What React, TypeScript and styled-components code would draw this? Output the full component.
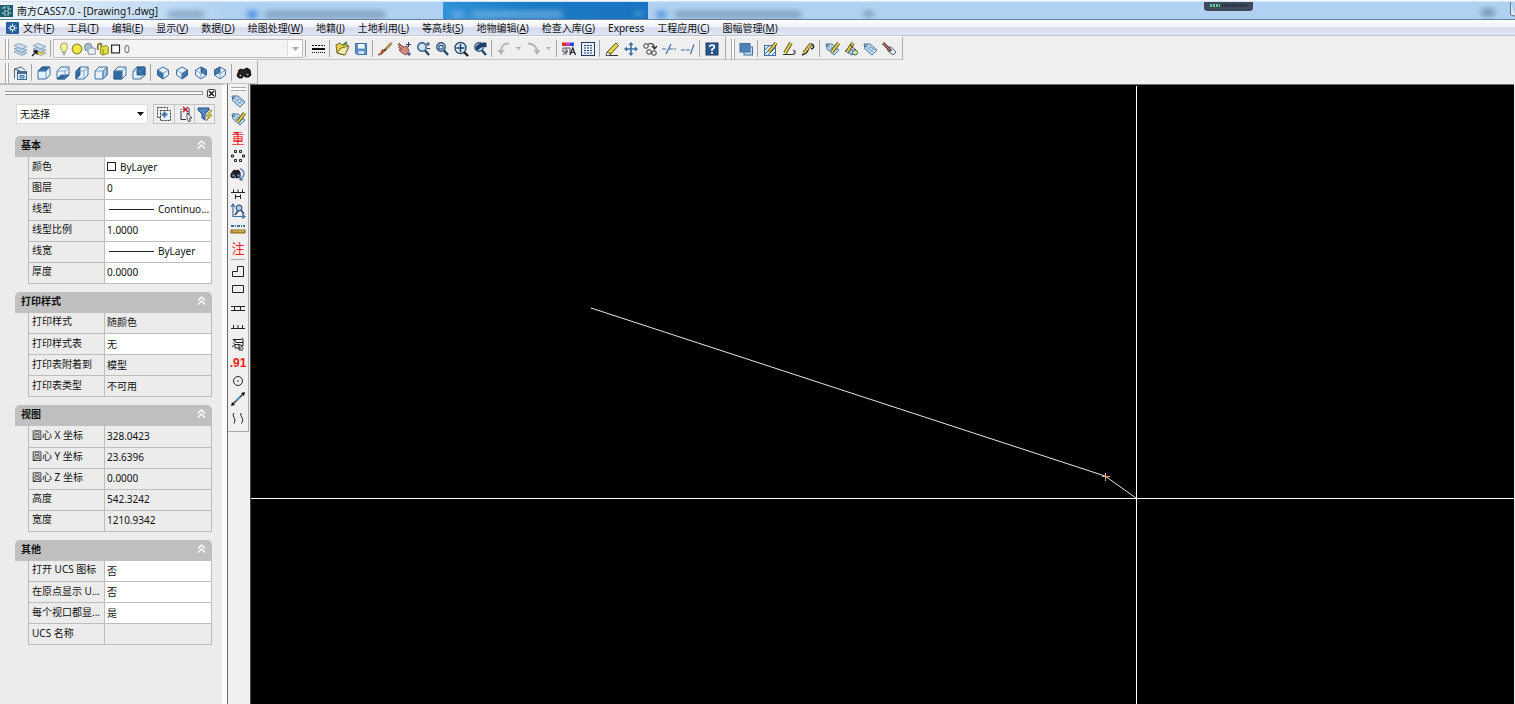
import React from "react";
import styled, { createGlobalStyle } from "styled-components";

const GlobalStyle = createGlobalStyle`
  *, *::before, *::after { box-sizing: border-box; }
  body {
    margin: 0;
    background: #ececec;
    color: #111;
    font: 10px/14px "Noto Sans", "Noto Sans CJK SC", sans-serif;
  }
  button, input, select { font: inherit; color: inherit; margin: 0; padding: 0; }
  svg { display: block; }
`;

const NAVY = "#1d3c6a";
const BLUE = "#3a70a6";
const SKY = "#a8c8e8";
const PALE = "#e4eff9";
const GOLD = "#e6d340";
const WOOD = "#8a6a1c";

/* ---------- layout ---------- */

const Window = styled.div`
  display: flex;
  flex-direction: column;
  min-height: 100vh;
`;

const TitleBar = styled.header`
  position: relative;
  display: flex;
  align-items: center;
  gap: 4px;
  height: 21px;
  overflow: hidden;
  background: linear-gradient(#f4f8fc 0 1px, #b0d1f1 2px 19px, #66809c 19px 20px, #fff 20px);
`;

const Glass = styled.svg`
  position: absolute;
  inset: 2px 0 2px 0;
  width: 100%;
  height: 17px;
`;

const Title = styled.h1`
  position: relative;
  margin: 0;
  padding-top: 1px;
  font-size: 10px;
  line-height: 16px;
  font-weight: 400;
`;

const TitleIcon = styled.span`
  position: relative;
`;

const MenuBar = styled.nav`
  display: flex;
  align-items: center;
  gap: 4px;
  height: 15px;
  padding-left: 6px;
  background: linear-gradient(#fcfdff, #eef1fa 40%, #d5dcef 50%, #e1e6f4);
  border-bottom: 1px solid #c3c6d0;
`;

const MenuList = styled.div`
  display: flex;
  gap: 13px;
`;

const MenuButton = styled.button`
  border: 0;
  background: none;
  line-height: 14px;
  white-space: nowrap;
`;

const ToolRow = styled.div`
  display: flex;
  height: 24px;
  background: #efefef;
`;

const ToolBar = styled.div`
  display: flex;
  align-items: center;
  padding: 1px 4px 0 5px;
  border-right: 1px solid #adadad;
  border-bottom: 1px solid #c4c4c4;
  border-top: 1px solid #fafafa;
`;

const Grip = styled.span<{ $across?: boolean }>`
  display: block;
  flex: none;
  width: ${(p) => (p.$across ? "15px" : "4px")};
  height: ${(p) => (p.$across ? "4px" : "20px")};
  margin: ${(p) => (p.$across ? "0 0 1px 3px" : "0 1px 0 0")};
  border: solid #a8a8a8;
  border-width: ${(p) => (p.$across ? "1px 0" : "0 1px")};
  background: #fdfdfd;
`;

const IconButton = styled.button`
  flex: none;
  display: flex;
  align-items: center;
  justify-content: center;
  width: 19px;
  height: 20px;
  border: 0;
  background: none;
`;

const DropArrow = styled.button`
  display: flex;
  align-items: center;
  justify-content: center;
  width: 11px;
  height: 20px;
  border: 0;
  background: none;
`;

const Divider = styled.span`
  flex: none;
  width: 1px;
  height: 17px;
  margin: 0 2px;
  background: #a6a6a6;
`;

const LayerBox = styled.div`
  display: flex;
  align-items: center;
  width: 250px;
  height: 19px;
  padding-left: 3px;
  background: #f4f4f4;
  border: 1px solid #bcbcbc;
`;

const LayerIcon = styled.span`
  width: 13px;
  height: 14px;
`;

const LayerSelect = styled.select`
  appearance: none;
  flex: 1;
  height: 17px;
  padding-left: 2px;
  border: 0;
  background: none;
  color: #666;
`;

const ArrowBox = styled.span`
  display: flex;
  align-items: center;
  justify-content: center;
  width: 15px;
  height: 15px;
  border-left: 1px solid #dcdcdc;
  background: #fafafa;
  pointer-events: none;
`;

const Body = styled.div`
  display: flex;
  flex: 1;
`;

const Panel = styled.aside`
  flex: none;
  width: 227px;
  padding: 3px 6px 20px 5px;
  background: #ececec;
  border-top: 1px solid #b9b9b9;
  border-right: 5px solid #fbfbfb;
`;

const PanelTop = styled.div`
  display: flex;
  align-items: center;
  gap: 4px;
  height: 10px;
`;

const PanelGrip = styled.span`
  flex: 1;
  height: 4px;
  border: solid #979797;
  border-width: 1px 1px 1px 0;
  background: #fafafa;
`;

const CloseButton = styled.button`
  width: 9px;
  height: 9px;
  border: 1px solid #444;
  border-radius: 2px;
  background: #f8f8f8;
`;

const Picker = styled.div`
  display: flex;
  align-items: center;
  gap: 5px;
  margin: 6px 0 12px 11px;
`;

const SelectWrap = styled.div`
  flex: none;
  display: flex;
  align-items: center;
  width: 132px;
  height: 20px;
  padding-right: 3px;
  background: #fff;
  border: 1px solid #dadada;
`;

const Select = styled.select`
  appearance: none;
  flex: 1;
  height: 18px;
  padding-left: 3px;
  border: 0;
  background: none;
`;

const PickButtons = styled.div`
  display: flex;
  border: 1px solid #c4c4c4;
`;

const PickButton = styled.button`
  display: flex;
  align-items: center;
  justify-content: center;
  width: 20px;
  height: 18px;
  border: 0;
  background: #efefef;
  & + & { border-left: 1px solid #c4c4c4; }
`;

const Group = styled.section`
  width: 197px;
  margin: 0 0 8px 10px;
`;

const GroupHead = styled.div`
  display: flex;
  align-items: center;
  justify-content: space-between;
  height: 21px;
  padding: 0 6px 3px;
  border-radius: 5px 5px 0 0;
  background: #c0c0c0;
`;

const GroupTitle = styled.h2`
  margin: 0;
  font-size: 10px;
  line-height: 14px;
  font-weight: 700;
`;

const Fold = styled.button`
  display: flex;
  align-items: center;
  height: 16px;
  border: 0;
  background: none;
`;

const Table = styled.table`
  width: 184px;
  margin-left: 13px;
  border-collapse: collapse;
  table-layout: fixed;
`;

const Name = styled.th`
  width: 76px;
  height: 21px;
  padding: 0 1px 3px 3px;
  border: 1px solid #bdbdbd;
  border-top: 0;
  font-weight: 400;
  text-align: left;
  white-space: nowrap;
  overflow: hidden;
  line-height: 14px;
`;

const Value = styled.td<{ $white?: boolean }>`
  height: 21px;
  padding: 0 0 1px 2px;
  border: 1px solid #bdbdbd;
  border-top: 0;
  background: ${(p) => (p.$white ? "#fff" : "transparent")};
  white-space: nowrap;
  line-height: 14px;
`;

const ValueInput = styled.input`
  display: block;
  width: 100%;
  height: 16px;
  border: 0;
  background: none;
  outline: 0;
`;

const Sample = styled.span`
  display: flex;
  align-items: center;
  gap: 4px;
`;

const Swatch = styled.span`
  width: 9px;
  height: 9px;
  border: 1px solid #222;
  background: #fff;
`;

const Stroke = styled.span`
  width: 45px;
  height: 1px;
  margin-left: 2px;
  background: #222;
`;

const Dock = styled.div`
  flex: none;
  width: 24px;
  background: #f0f0f0;
  border-left: 1px solid #6b6b6b;
  border-right: 1px solid #4a4a4a;
`;

const Strip = styled.div`
  width: 21px;
  height: 348px;
  padding-top: 3px;
  border-right: 1px solid #a9a9a9;
  border-bottom: 1px solid #a9a9a9;
`;

const StripGroup = styled.div`
  display: grid;
  grid-auto-rows: 1fr;
  height: 165px;
`;

const StripButton = styled.button`
  display: flex;
  align-items: center;
  justify-content: center;
  width: 20px;
  min-height: 0;
  border: 0;
  background: none;
`;

const StripRule = styled.span`
  display: block;
  height: 1px;
  margin: 2px 3px;
  background: #a9a9a9;
`;

const RedGlyph = styled.span<{ $small?: boolean }>`
  color: #ee1c1c;
  font-family: ${(p) => (p.$small ? '"Liberation Sans Narrow", "Liberation Sans"' : '"Noto Sans CJK SC"')}, sans-serif;
  font-size: ${(p) => (p.$small ? "12px" : "13px")};
  font-weight: ${(p) => (p.$small ? 700 : 400)};
  line-height: 16px;
`;

const Canvas = styled.main`
  flex: 1;
  display: flex;
  min-width: 0;
  margin-right: 1px;
  background: #000;
  border-top: 1px solid #6e6e6e;
`;

const Drawing = styled.svg`
  width: 100%;
  height: auto;
  flex: 1;
`;

/* ---------- icons ---------- */

const Svg = ({ children, size = 16 }: { children: React.ReactNode; size?: number }) => (
  <svg width={size} height={size} viewBox="0 0 16 16" fill="none" stroke={NAVY} strokeWidth="1" aria-hidden="true">
    {children}
  </svg>
);

const Pencil = ({ d = "M14 2 L6 12" }: { d?: string }) => (
  <>
    <path d={d} stroke="#4d4420" strokeWidth="3.6" />
    <path d={d} stroke={GOLD} strokeWidth="2" />
  </>
);

const sheets = (c: string) => (
  <>
    <path d="M2 11 L7 9 L15 12 L10 14.5Z" fill={c} stroke="#7c98b4" strokeWidth=".7" />
    <path d="M2 8 L7 6 L15 9 L10 11.5Z" fill="#b9d0e6" stroke="#6c8cae" strokeWidth=".7" />
    <path d="M2 4.5 L7 2.5 L15 5.5 L10 8Z" fill="#cfdfee" stroke="#6c8cae" strokeWidth=".7" />
  </>
);

const lens = (
  <>
    <circle cx="7" cy="6" r="4.2" fill="#cfe2f4" stroke="#33597f" strokeWidth="1.4" />
    <path d="M10 9.5 L14 14" stroke="#27456b" strokeWidth="2.4" />
  </>
);

const tag = (
  <>
    <path d="M2 3 L8 3 L15 9 L10 14 L3 8Z" fill="#cfe3f3" stroke="#3e749f" />
    <path d="M5 6 L11 11 M7 5 L13 9 M5 9 L9 6 M8 11 L12 8" stroke="#5b91bb" strokeWidth=".8" />
    <circle cx="4" cy="4.6" r="1" fill="#fff" stroke={NAVY} strokeWidth=".7" />
  </>
);

const icons: Record<string, React.ReactNode> = {
  layers: sheets("#b9cfe4"),
  layerPrev: (<>{sheets(GOLD)}<path d="M1 15 L6 10 M2.5 10 H6 V13.5" stroke="#111" strokeWidth="1.3" /></>),
  lines: (
    <g stroke="#111">
      <path d="M2 4.5 H15" strokeDasharray="2 1" />
      <path d="M2 8 H15" strokeWidth="2" />
      <path d="M2 11.5 H15" strokeDasharray="1 1" />
    </g>
  ),
  open: (<><path d="M2 4 L6 2 L8 4 L13 3 L14 8 L10 14 L3 12Z" fill={GOLD} stroke="#6c6730" /><path d="M3 12 L7 7 L15 5 L11 14Z" fill="#f4edaa" stroke="#6c6730" /><path d="M9 4 L13 1" stroke="#3f8a4c" strokeWidth="1.6" /></>),
  save: (<><path d="M2.5 2.5 H13.5 V13.5 H4 L2.5 12Z" fill="#5b93c6" stroke={BLUE} /><path d="M5 3 H11.5 V7.5 H5Z" fill="#eef5fb" stroke="none" /><path d="M5.5 10 H11 V13 H5.5Z" fill="#d4e2ef" stroke="none" /></>),
  brush: (<><path d="M14.5 2 L7 10" stroke="#5b4a2a" strokeWidth="2.4" /><path d="M14.5 2 L9 8" stroke="#dca556" strokeWidth="1.2" /><path d="M1 14 Q6 14 7.5 9.5 L5 8.5 Q4.5 12 1 14Z" fill="#c05c2a" stroke="#77381a" strokeWidth=".6" /></>),
  pan: (<><path d="M2 3 L8 6 L11 5 L13 10 L10 14 L6 12 L3 9 L5 8Z" fill="#d48a80" stroke="#94534c" /><path d="M3 2 L8 7 M2 6 L6 9" stroke="#94534c" /><path d="M12.5 1 V6 M10 3.5 H15 M13 11 V15 M11 13 H15" stroke={NAVY} /></>),
  zoomRt: (<>{lens}<path d="M13 1 V5 M11 3 H15 M12 7.5 H15" stroke={NAVY} /></>),
  zoomWin: (<>{lens}<path d="M5 4.5 H9 V8 H5Z" stroke={NAVY} /></>),
  zoomAll: (<><circle cx="7.5" cy="7" r="5.5" fill="#dcebf7" stroke="#2c5079" strokeWidth="1.4" /><path d="M7.5 3 V11 M3.5 7 H11.5" stroke={NAVY} strokeWidth="1.5" /><path d="M11 11 L15 15" stroke="#223" strokeWidth="2.4" /></>),
  zoomPrev: (<>{lens}<path d="M4 6 Q8 1 14 2 V6 L11 5 L5 9Z" fill={NAVY} stroke={NAVY} /></>),
  undo: (<><path d="M13 2.5 Q5 2 5 11" stroke="#b4b4b4" strokeWidth="1.8" /><path d="M1.5 9 L5 14 L8.5 9Z" fill="#b4b4b4" stroke="none" /></>),
  redo: (<><path d="M2 2.5 Q11 3 11 11" stroke="#b4b4b4" strokeWidth="1.8" /><path d="M7.5 9 L11 14 L14.5 9Z" fill="#b4b4b4" stroke="none" /></>),
  props: (<><path d="M1 1.5 H5 V5 H1Z" fill="#d03030" stroke="none" /><path d="M5 1.5 H9 V5 H5Z" fill="#c83cc0" stroke="none" /><path d="M9 1.5 H13 V5 H9Z" fill="#3048d0" stroke="none" /><path d="M2 7 H9 V13 M2 7 V11 H7 M5 7 V14 M7 9 L2 14" stroke="#556" /><path d="M9 14 L11.8 7 L14.500 14 M10 11.5 H13.5" stroke="#222" strokeWidth="1.2" /></>),
  grid: (<><rect x="1.5" y="1.5" width="13" height="13" fill="#e9f1f8" stroke={NAVY} /><path d="M4 4.5 H13 M4 7 H13 M4 9.5 H13 M4 12 H13" stroke={NAVY} strokeDasharray="2 1" /></>),
  eraser: (<><path d="M3 11 L12 2 L14.5 4.5 L7 13Z" fill={GOLD} stroke="#5c5526" /><path d="M3 11 L7 13 L5 14.5 H2Z" fill="#fff" stroke="#555" /><path d="M5 14.5 H14" stroke="#333" /></>),
  move: (<><path d="M8 2 V14 M2 8 H14" stroke={BLUE} strokeWidth="1.6" /><path d="M8 1 L10.5 4 H5.5Z M8 15 L10.5 12 H5.5Z M1 8 L4 5.5 V10.5Z M15 8 L12 5.5 V10.5Z" fill={BLUE} stroke="none" /></>),
  copy: (<><circle cx="4" cy="5" r="2.3" stroke="#333" /><circle cx="7" cy="11" r="2.3" stroke="#333" /><circle cx="12" cy="12" r="2.3" stroke="#333" /><path d="M6 3 Q12 1 12.5 7 M10 5 L12.5 8 L15 5" stroke="#333" strokeWidth="1.2" /></>),
  trim: (<><path d="M1 8 H6 M8 8 H15" stroke={BLUE} strokeDasharray="4 1" /><path d="M10 3 L5 13" stroke={BLUE} strokeWidth="1.2" /></>),
  extend: (<><path d="M1 9 H11" stroke={BLUE} strokeDasharray="4 1" /><path d="M14 3.5 L10.5 13" stroke={BLUE} strokeWidth="1.2" /></>),
  help: (<><rect x="2" y="2" width="12" height="12" fill="#26578c" stroke={NAVY} /><path d="M5.7 6 Q5.7 4 8 4 Q10.5 4 10.3 6 Q10 7.5 8 8.3 V10 M8 11 V13" stroke="#fff" strokeWidth="1.7" /></>),
  order: (<><rect x="6" y="6" width="8.5" height="8" fill="#c5d7e8" stroke={BLUE} /><rect x="2" y="2.5" width="10" height="8.5" fill="#4f83b3" stroke={BLUE} /></>),
  hatchEdit: (<><rect x="2.5" y="4.5" width="11" height="10" fill="#e3eff9" stroke={BLUE} /><path d="M3 9 L7 5 M3 13 L11 5 M6 14 L13 7 M10 14 L13 11" stroke={BLUE} /><Pencil d="M14 2 L7 11" /></>),
  plineEdit: (<><path d="M2 13.5 H12 Q16 12 12.5 9" stroke="#333" strokeWidth="1.2" /><Pencil d="M10 2 L4 12" /></>),
  splineEdit: (<><path d="M2 14 Q8 12 8 8 Q10 1 13 4 Q15 7 11 8" stroke="#222" strokeWidth="1.5" /><Pencil d="M11 3 L4 12" /></>),
  attrEdit: (<>{tag}<Pencil d="M14.5 2 L8 11" /></>),
  attrSync: (<><path d="M2 10 L7 7 L13 11 L9 14Z" fill={SKY} stroke={BLUE} /><Pencil d="M10 2 L4 11" /><path d="M7 4 L13 9" stroke="#333" /><circle cx="12" cy="11.5" r="2.5" fill="#d3e8be" stroke="#426a35" /></>),
  attr: tag,
  attrOut: (<><path d="M6 6 L10 6 L15 11 L12 14 L7 10Z" fill="#dfeaf4" stroke="#567" /><path d="M2 2 L10 10" stroke="#723a36" strokeWidth="3" /><path d="M2 2 L9 9" stroke="#c58c86" strokeWidth="1" /></>),
  views: (<><path d="M2.5 13.500 V4 L9 2 L13 5" stroke="#486a90" /><path d="M2.5 4 L8 6" stroke="#33597f" /><rect x="5.5" y="6.5" width="9" height="8" fill="#e7f0f8" stroke={BLUE} /><path d="M5.5 8 H14.5" stroke={NAVY} strokeWidth="1.5" /><path d="M8 10.5 H12 V13 H8Z" fill={SKY} stroke={BLUE} /></>),
  find: (<><path d="M1 11 L3 5 L5 4 L7 5 L9 4 L11 3 L14 5 L15 10 L13 12 L9 12 L8 10 L6 13 H3Z" fill="#222" stroke="#111" /><circle cx="4.500" cy="10.5" r="1.6" fill="#999" stroke="#111" /><circle cx="11.5" cy="9.5" r="1.6" fill="#888" stroke="#111" /></>),
  array: (
    <g stroke="#222">
      <path d="M4.5 2.5 h2 v2 h-2Z M9.5 2.5 h2 v2 h-2Z M4.5 11.500 h2 v2 h-2Z M9.5 11.5 h2 v2 h-2Z M1.5 7 h2 v2 h-2Z M12.5 7 h2 v2 h-2Z" />
    </g>
  ),
  findNext: (<><path d="M1 8 L4 4 L6 5 L8 4 L10 6 V11 L6 12 V8 L4 12 L1 11Z" fill="#222" stroke="#111" /><circle cx="3.5" cy="9.5" r="1.5" fill="#999" /><circle cx="8.5" cy="9.5" r="1.5" fill="#999" /><path d="M10 2.5 Q18 7 10 14 M10 14 V11 M10 14 H13" stroke={BLUE} strokeWidth="1.2" /></>),
  fence: (<path d="M1 7.5 H15 M3.5 7 V4.5 M8 7 V4.500 M12.5 7 V4.5 M5.5 9.5 V14 M10.5 9.5 V14 M5.5 11.5 H10.5" stroke="#222" />),
  ucs: (<><path d="M3 2 V13.5 H14 M1 4 L3 1 L5 4 M12 11.5 L15 13.5 L12 15.5" stroke={BLUE} strokeWidth="1.2" /><circle cx="9" cy="5" r="3" fill={SKY} stroke={NAVY} /><path d="M5 12 L8 8 M11 7 L14 11" stroke={NAVY} strokeWidth="1.4" /></>),
  ruler: (<><path d="M1 5 H15" stroke={BLUE} strokeWidth="2" strokeDasharray="3 1 1 1" /><rect x="1" y="9" width="14" height="3" fill="#b9902e" stroke={WOOD} /><path d="M4 9 V11 M7 9 V11 M10 9 V11 M13 9 V11" stroke="#e8d080" /></>),
  house: <path d="M2.5 13.5 V8.5 H7.5 V3.5 H13.5 V13.5Z" stroke="#222" />,
  rect: <path d="M2.5 4.5 H13.5 V11.5 H2.5Z" stroke="#222" />,
  rail: <path d="M1 6.5 H15 M1 10.5 H15 M4.5 6.5 V10.5 M10.5 6.5 V10.5" stroke="#222" />,
  slope: <path d="M1 10.5 H15 M3.5 10 V7 M8 10 V7 M12.5 10 V7" stroke="#222" />,
  terrain: <path d="M3 3.5 H11 L13 2 M3 3.5 L6 6.5 H13 M5 3.5 V6 M13 3 V10 L9 8.500 H5 L2 11 M5 9 V12 H11 M9 9 V14 H13 M3 6.5 L5 8.500 M11 10 L13.5 13" stroke="#222" />,
  circle: (<><circle cx="8" cy="8" r="4.5" stroke="#222" /><circle cx="8" cy="8" r=".8" fill="#222" stroke="none" /></>),
  measure: (<><path d="M3 13 L13 3" stroke="#222" strokeWidth="1.2" /><path d="M1 15 L2 11 L5 14Z M15 1 L14 5 L11 2Z" fill="#111" stroke="none" /><path d="M6 10 L10 6" stroke="#4f93c8" strokeWidth="2.2" /></>),
  waves: <path d="M4 3 Q2 5 4 7.5 T4 13.5 M11 3 Q10 5 12 7.5 T11.5 13.500" stroke="#222" />,
};

const Icon = ({ name }: { name: string }) => <Svg>{icons[name]}</Svg>;

const boxFaces: Record<string, string> = {
  top: "M2 6 L6 2 H14 L10 6Z",
  bottom: "M2 14 L6 10 H14 L10 14Z",
  left: "M2 6 L6 2 V10 L2 14Z",
  right: "M10 6 L14 2 V10 L10 14Z",
  front: "M2 6 H10 V14 H2Z",
  back: "M6 2 H14 V10 H6Z",
};

const BoxIcon = ({ face }: { face: string }) => (
  <Svg>
    <path d="M2 6 L6 2 H14 V10 L10 14 H2Z" fill={PALE} stroke={BLUE} />
    <path d={boxFaces[face]} fill={face === "right" ? SKY : "#2f6ba3"} stroke="#2a5688" strokeWidth=".8" />
    <path d="M2 6 H10 V14 M10 6 L14 2" stroke="#5c8fbe" strokeWidth=".8" />
  </Svg>
);

const isoFaces: Record<string, string> = {
  sw: "M2.5 5 L8 8.500 V14 L2.5 10Z",
  se: "M13.5 5 L8 8.500 V14 L13.5 10Z",
  ne: "M8 2 L13.5 5 V10 L8 7.500Z",
  nw: "M8 2 L2.5 5 V10 L8 7.500Z",
};

const IsoIcon = ({ face }: { face: string }) => (
  <Svg>
    <path d="M8 2 L13.5 5 V10 L8 14 L2.5 10 V5Z" fill={PALE} stroke={BLUE} />
    <path d={isoFaces[face]} fill="#3a74ab" stroke="#2a5688" strokeWidth=".8" />
    <path d="M2.5 5 L8 8.500 L13.5 5 M8 8.500 V14" stroke="#5c8fbe" strokeWidth=".8" />
  </Svg>
);

const Down = ({ color = "#111" }: { color?: string }) => (
  <svg width="7" height="4" viewBox="0 0 7 4" aria-hidden="true">
    <path d="M0 0 H7 L3.5 4Z" fill={color} />
  </svg>
);

/* ---------- toolbars ---------- */

const Tools = ({ names }: { names: string[] }) => (
  <>
    {names.map((n, i) =>
      n === "|" ? (
        <Divider key={i} />
      ) : n === "v" ? (
        <DropArrow key={i} aria-label="history">
          <svg width="5" height="3" viewBox="0 0 5 3" aria-hidden="true"><path d="M0 0 H5 L2.5 3Z" fill="#b0b0b0" /></svg>
        </DropArrow>
      ) : (
        <IconButton key={i} aria-label={n}>
          <Icon name={n} />
        </IconButton>
      )
    )}
  </>
);

const menus: [string, string?][] = [
  ["文件", "F"], ["工具", "T"], ["编辑", "E"], ["显示", "V"], ["数据", "D"],
  ["绘图处理", "W"], ["地籍", "J"], ["土地利用", "L"], ["等高线", "S"],
  ["地物编辑", "A"], ["检查入库", "G"], ["Express"], ["工程应用", "C"], ["图幅管理", "M"],
];

const LayerPicker = () => (
  <LayerBox>
    <LayerIcon><Svg size={14}><path d="M8 1 Q12 1 12 5 Q12 8 10 11 H6 Q4 8 4 5 Q4 1 8 1Z" fill="#f6efa0" stroke="#a09a50" /><path d="M6 12.5 H10 M7 14.5 H9" stroke="#667" /></Svg></LayerIcon>
    <LayerIcon><Svg size={14}><circle cx="8" cy="8" r="5.5" fill="#f0ea3c" stroke="#8b8830" strokeWidth="1.3" /></Svg></LayerIcon>
    <LayerIcon><Svg size={14}><circle cx="6" cy="6" r="4.5" fill="#a9bccb" stroke="#6d8496" /><path d="M8 7 H14 V14 H6 V11" fill="#e8eef3" stroke="#7d8c99" /></Svg></LayerIcon>
    <LayerIcon><Svg size={14}><path d="M2 9 V4 Q3 1 6 2 V5" stroke="#7d7a20" strokeWidth="2" /><path d="M5 6 L12 4 L14 6 V13 L7 15 L5 13Z" fill="#e4de3c" stroke="#7d7a20" /><path d="M8 8 V14" stroke="#7d7a20" /></Svg></LayerIcon>
    <LayerIcon><Svg size={14}><rect x="3" y="3.5" width="9" height="9" fill="#fff" stroke="#222" strokeWidth="1.3" /></Svg></LayerIcon>
    <LayerSelect aria-label="图层"><option>0</option></LayerSelect>
    <ArrowBox><Down color="#aaa" /></ArrowBox>
  </LayerBox>
);

/* ---------- properties ---------- */

type Kind = "swatch" | "stroke" | "edit" | "fixed";
const groups: { title: string; rows: [string, string, Kind][] }[] = [
  {
    title: "基本",
    rows: [
      ["颜色", "ByLayer", "swatch"], ["图层", "0", "edit"], ["线型", "Continuo...", "stroke"],
      ["线型比例", "1.0000", "edit"], ["线宽", "ByLayer", "stroke"], ["厚度", "0.0000", "edit"],
    ],
  },
  {
    title: "打印样式",
    rows: [
      ["打印样式", "随颜色", "fixed"], ["打印样式表", "无", "edit"],
      ["打印表附着到", "模型", "fixed"], ["打印表类型", "不可用", "fixed"],
    ],
  },
  {
    title: "视图",
    rows: [
      ["圆心 X 坐标", "328.0423", "fixed"], ["圆心 Y 坐标", "23.6396", "fixed"],
      ["圆心 Z 坐标", "0.0000", "fixed"], ["高度", "542.3242", "fixed"], ["宽度", "1210.9342", "fixed"],
    ],
  },
  {
    title: "其他",
    rows: [
      ["打开 UCS 图标", "否", "edit"], ["在原点显示 U...", "否", "edit"],
      ["每个视口都显...", "是", "edit"], ["UCS 名称", "", "fixed"],
    ],
  },
];

const Cell = ({ name, value, kind }: { name: string; value: string; kind: Kind }) => {
  if (kind === "edit") return <ValueInput aria-label={name} defaultValue={value} />;
  if (kind === "swatch") return <Sample><Swatch />{value}</Sample>;
  if (kind === "stroke") return <Sample><Stroke />{value}</Sample>;
  return <>{value}</>;
};

const Properties = () => (
  <Panel>
    <PanelTop>
      <PanelGrip />
      <CloseButton aria-label="关闭">
        <svg width="7" height="7" viewBox="0 0 7 7" aria-hidden="true"><path d="M1 1 L6 6 M6 1 L1 6" stroke="#111" strokeWidth="1.4" /></svg>
      </CloseButton>
    </PanelTop>
    <Picker>
      <SelectWrap>
        <Select aria-label="选择"><option>无选择</option></Select>
        <Down />
      </SelectWrap>
      <PickButtons>
        <PickButton aria-label="PICKADD">
          <Svg><rect x="1.5" y="1.5" width="10" height="10" stroke="#333" strokeDasharray="2 1" /><rect x="4.5" y="4.5" width="10" height="10" fill="#eaf2fa" stroke="#333" strokeDasharray="2 1" /><path d="M8.5 5.5 V11.500 M5.5 8.5 H11.5" stroke={BLUE} strokeWidth="2" /></Svg>
        </PickButton>
        <PickButton aria-label="选择对象">
          <Svg><path d="M4 5 V13.5 H9 M12 2 V9" stroke="#334" /><path d="M3 3.5 H10" stroke="#778" strokeDasharray="2 1" /><path d="M6 1 L11 6 M11 1 L6 6" stroke="#c02030" strokeWidth="1.5" /><path d="M10 7 L15 12 H12.5 L13.5 15 L11.5 15.5 L10 12Z" fill="#fff" stroke="#222" strokeWidth=".8" /></Svg>
        </PickButton>
        <PickButton aria-label="快速选择">
          <Svg><path d="M1 2 H12 V4 L8 8 V14 L5 12 V8 L1 4Z" fill="#4f8ac0" stroke="#285080" /><path d="M14 4 L9 10 H12 L9 15 L15 9 H12 L15 4Z" fill="#f0dc30" stroke="#7d7428" strokeWidth=".7" /></Svg>
        </PickButton>
      </PickButtons>
    </Picker>
    {groups.map((g) => (
      <Group key={g.title}>
        <GroupHead>
          <GroupTitle>{g.title}</GroupTitle>
          <Fold aria-label={"折叠 " + g.title}>
            <svg width="9" height="10" viewBox="0 0 9 10" fill="none" stroke="#fff" strokeWidth="1.4" aria-hidden="true"><path d="M1 4.5 L4.5 1 L8 4.5 M1 8.5 L4.5 5 L8 8.5" /></svg>
          </Fold>
        </GroupHead>
        <Table>
          <tbody>
            {g.rows.map(([n, v, k]) => (
              <tr key={n}>
                <Name scope="row">{n}</Name>
                <Value $white={k !== "fixed"}><Cell name={n} value={v} kind={k} /></Value>
              </tr>
            ))}
          </tbody>
        </Table>
      </Group>
    ))}
  </Panel>
);

const stripA = ["attr", "attrEdit", "重", "array", "findNext", "fence", "ucs", "ruler", "注"];
const stripB = ["house", "rect", "rail", "slope", "terrain", ".91", "circle", "measure", "waves"];

const StripItems = ({ names }: { names: string[] }) => (
  <StripGroup>
    {names.map((n) => (
      <StripButton key={n} aria-label={n}>
        {icons[n] ? <Icon name={n} /> : <RedGlyph $small={n === ".91"}>{n}</RedGlyph>}
      </StripButton>
    ))}
  </StripGroup>
);

export default function App() {
  return (
    <Window>
      <GlobalStyle />
      <TitleBar>
        <Glass aria-hidden="true">
          <defs>
            <filter id="soft" x="-20%" y="-100%" width="140%" height="300%"><feGaussianBlur stdDeviation="3 2" /></filter>
            <linearGradient id="tab"><stop offset="0" stopColor="#2f93d6" /><stop offset=".4" stopColor="#1b7bc6" /><stop offset="1" stopColor="#1a74c0" /></linearGradient>
            <linearGradient id="shine" x1="0" x2="1"><stop offset="0" stopColor="#fff" stopOpacity=".75" /><stop offset="1" stopColor="#fff" stopOpacity="0" /></linearGradient>
          </defs>
          <rect width="230" height="17" fill="url(#shine)" />
          <rect x="443" width="205" height="17" fill="url(#tab)" />
          <g filter="url(#soft)">
            <rect x="168" y="8" width="36" height="9" fill="#7796b8" opacity=".6" />
            <rect x="248" y="8" width="9" height="9" fill="#3f83dd" opacity=".8" />
            <rect x="265" y="8" width="120" height="9" fill="#7391b0" opacity=".6" />
            <rect x="452" y="8" width="12" height="9" fill="#69a5e6" opacity=".8" />
            <rect x="472" y="8" width="90" height="9" fill="#6badde" opacity=".7" />
            <rect x="636" y="9" width="6" height="5" fill="#6badde" opacity=".7" />
            <rect x="657" y="8" width="9" height="9" fill="#4a8ee0" opacity=".8" />
            <rect x="675" y="8" width="126" height="9" fill="#7391b0" opacity=".6" />
            <rect x="864" y="8" width="9" height="8" fill="#6787a8" opacity=".6" />
            <rect x="1482" y="6" width="12" height="9" fill="#6787a8" opacity=".7" />
          </g>
          <path d="M1204 0 H1253 V6 Q1253 9 1249 9 H1208 Q1204 9 1204 6Z" fill="#3e4a5c" />
          <path d="M1210 3.5 H1220" stroke="#5fd0a0" strokeWidth="3" strokeDasharray="2 1" />
          <path d="M1222 3.5 H1248" stroke="#262f3d" strokeWidth="3" strokeDasharray="1 1" />
          <path d="M1510.5 0 V12 Q1510.5 14 1515 14" fill="#dfe9f3" stroke="#5d7187" />
        </Glass>
        <TitleIcon>
          <svg width="13" height="14" viewBox="0 0 13 14" aria-hidden="true">
            <rect y="1" width="13" height="12" fill="#1f5e6c" />
            <path d="M2 4 H5 V2 M8 2 V5 H11 M2 9 H5 V12 M8 12 V9 H11 M4 7 H9" stroke="#b9e6e2" fill="none" />
          </svg>
        </TitleIcon>
        <Title>南方CASS7.0 - [Drawing1.dwg]</Title>
      </TitleBar>
      <MenuBar>
        <svg width="13" height="12" viewBox="0 0 13 12" aria-hidden="true">
          <rect width="13" height="12" rx="1" fill="#215f94" />
          <path d="M6.5 1.5 V10.5 M2 6 H11 M3.5 3 L9.5 9 M9.5 3 L3.5 9" stroke="#cfe9fa" />
          <circle cx="6.5" cy="6" r="2" fill="#215f94" stroke="#fff" />
        </svg>
        <MenuList>
          {menus.map(([label, key]) => (
            <MenuButton key={label}>
              {key ? <>{label}(<u>{key}</u>)</> : label}
            </MenuButton>
          ))}
        </MenuList>
      </MenuBar>
      <ToolRow>
        <ToolBar>
          <Grip />
          <Tools names={["layers", "layerPrev", "|"]} />
          <LayerPicker />
          <Tools names={["|", "lines", "|", "open", "save", "|", "brush", "pan", "zoomRt", "zoomWin", "zoomAll", "zoomPrev", "|", "undo", "v", "redo", "v", "|", "props", "grid", "|", "eraser", "move", "copy", "trim", "extend", "|", "help"]} />
        </ToolBar>
        <ToolBar>
          <Grip />
          <Tools names={["order", "|", "hatchEdit", "plineEdit", "splineEdit", "|", "attrEdit", "attrSync", "attr", "attrOut"]} />
        </ToolBar>
      </ToolRow>
      <ToolRow>
        <ToolBar>
          <Grip />
          <Tools names={["views", "|"]} />
          {["top", "bottom", "left", "right", "front", "back"].map((f) => (
            <IconButton key={f} aria-label={f}><BoxIcon face={f} /></IconButton>
          ))}
          <Divider />
          {["sw", "se", "ne", "nw"].map((f) => (
            <IconButton key={f} aria-label={f}><IsoIcon face={f} /></IconButton>
          ))}
          <Tools names={["|", "find"]} />
        </ToolBar>
      </ToolRow>
      <Body>
        <Properties />
        <Dock>
          <Strip>
            <Grip $across />
            <StripItems names={stripA} />
            <StripRule />
            <StripItems names={stripB} />
          </Strip>
        </Dock>
        <Canvas>
          <Drawing aria-label="Drawing1.dwg">
            <g shapeRendering="crispEdges" stroke="#fff">
              <line x1="885.5" y1="1" x2="885.5" y2="100%" />
              <line x1="0" y1="413.5" x2="100%" y2="413.5" />
            </g>
            <polyline points="340,223 854,391 885,413" fill="none" stroke="#e6e6e6" />
            <path d="M854.5 388 V396 M851 391.5 H859" stroke="#e0a878" />
          </Drawing>
        </Canvas>
      </Body>
    </Window>
  );
}
